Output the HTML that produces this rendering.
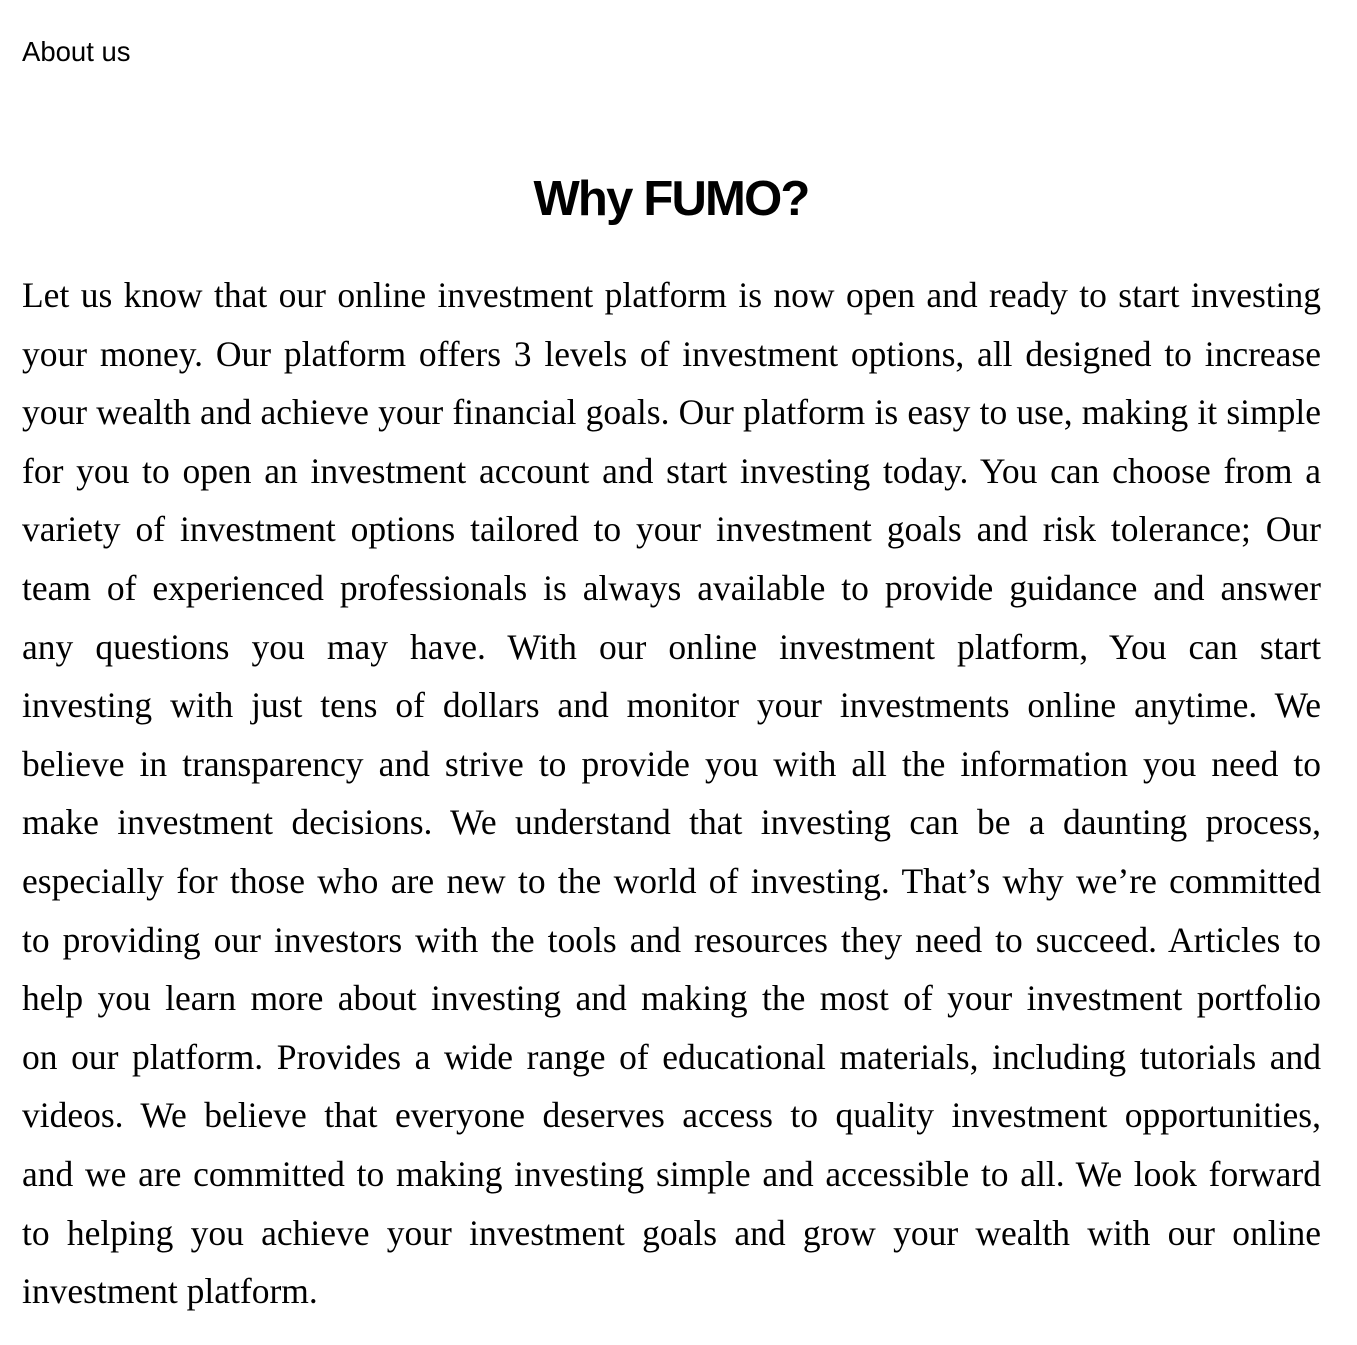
<!DOCTYPE html>
<html><head><meta charset="utf-8"><style>
body{margin:0;background:#fff;width:1357px;height:1345px;overflow:hidden;color:#000}
.about{position:absolute;left:22px;top:36px;font:27.5px "Liberation Sans",sans-serif;}
h1{position:absolute;left:0;width:1342px;top:167px;margin:0;text-align:center;font:bold 49px/64px "Liberation Sans",sans-serif;letter-spacing:-1.8px}
.body{position:absolute;left:22px;top:266px;width:1299px;font:35.5px "Liberation Serif",serif}
.l{height:58.6px;line-height:58.6px;text-align:justify;text-align-last:justify;white-space:nowrap;overflow:visible}
.l.last{text-align-last:left}
</style></head><body>
<div class="about">About us</div>
<h1>Why FUMO?</h1>
<div class="body">
<div class="l">Let us know that our online investment platform is now open and ready to start investing</div>
<div class="l">your money. Our platform offers 3 levels of investment options, all designed to increase</div>
<div class="l">your wealth and achieve your financial goals. Our platform is easy to use, making it simple</div>
<div class="l">for you to open an investment account and start investing today. You can choose from a</div>
<div class="l">variety of investment options tailored to your investment goals and risk tolerance; Our</div>
<div class="l">team of experienced professionals is always available to provide guidance and answer</div>
<div class="l">any questions you may have. With our online investment platform, You can start</div>
<div class="l">investing with just tens of dollars and monitor your investments online anytime. We</div>
<div class="l">believe in transparency and strive to provide you with all the information you need to</div>
<div class="l">make investment decisions. We understand that investing can be a daunting process,</div>
<div class="l">especially for those who are new to the world of investing. That’s why we’re committed</div>
<div class="l">to providing our investors with the tools and resources they need to succeed. Articles to</div>
<div class="l">help you learn more about investing and making the most of your investment portfolio</div>
<div class="l">on our platform. Provides a wide range of educational materials, including tutorials and</div>
<div class="l">videos. We believe that everyone deserves access to quality investment opportunities,</div>
<div class="l">and we are committed to making investing simple and accessible to all. We look forward</div>
<div class="l">to helping you achieve your investment goals and grow your wealth with our online</div>
<div class="l last">investment platform.</div>
</div>
</body></html>
